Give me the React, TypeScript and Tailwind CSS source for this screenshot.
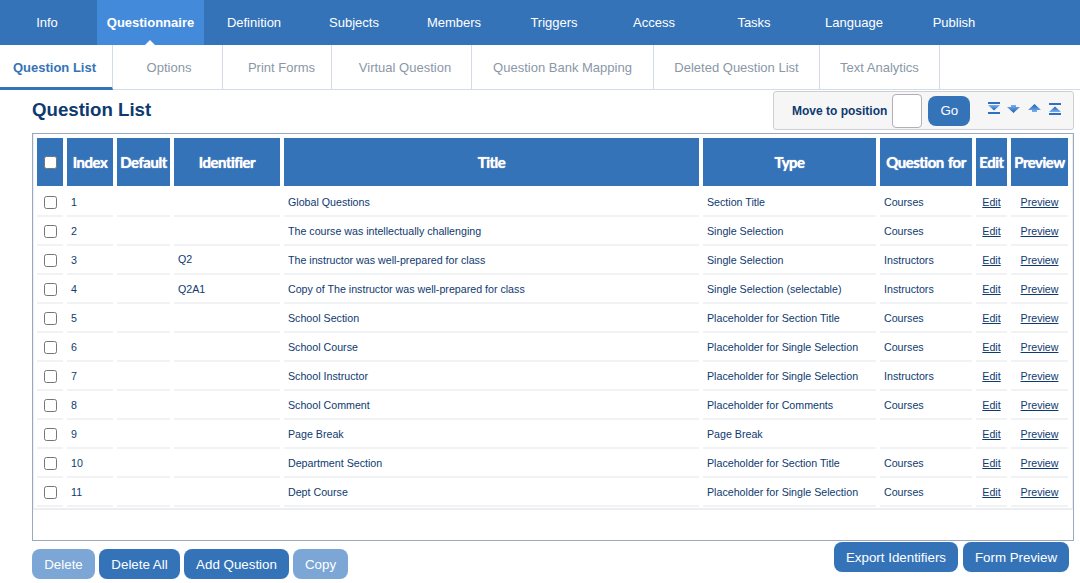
const navItems = ['Definition', 'Subjects', 'Members', 'Triggers', 'Access', 'Tasks', 'Language', 'Publish']

const subTabs = [
    { label: 'Options', className: 'w-[110px] pl-[3px]' },
    { label: 'Print Forms', className: 'w-[109px] pl-[9px]' },
    { label: 'Virtual Question', className: 'w-[140px] pl-[7px]' },
    { label: 'Question Bank Mapping', className: 'w-[182px]' },
    { label: 'Deleted Question List', className: 'w-[166px]' },
    { label: 'Text Analytics', className: 'w-[120px]' },
]

const rows = [
    ['1', '', 'Global Questions', 'Section Title', 'Courses'],
    ['2', '', 'The course was intellectually challenging', 'Single Selection', 'Courses'],
    ['3', 'Q2', 'The instructor was well-prepared for class', 'Single Selection', 'Instructors'],
    ['4', 'Q2A1', 'Copy of The instructor was well-prepared for class', 'Single Selection (selectable)', 'Instructors'],
    ['5', '', 'School Section', 'Placeholder for Section Title', 'Courses'],
    ['6', '', 'School Course', 'Placeholder for Single Selection', 'Courses'],
    ['7', '', 'School Instructor', 'Placeholder for Single Selection', 'Instructors'],
    ['8', '', 'School Comment', 'Placeholder for Comments', 'Courses'],
    ['9', '', 'Page Break', 'Page Break', ''],
    ['10', '', 'Department Section', 'Placeholder for Section Title', 'Courses'],
    ['11', '', 'Dept Course', 'Placeholder for Single Selection', 'Courses'],
]

const headers = [
    { label: 'Index', width: 'w-[46px]' },
    { label: 'Default', width: 'w-[53px]' },
    { label: 'Identifier', width: 'w-[106px]' },
    { label: 'Title', width: 'w-[415px]' },
    { label: 'Type', width: 'w-[173px]' },
    { label: 'Question for', width: 'w-[92px]' },
    { label: 'Edit', width: 'w-[31px]' },
    { label: 'Preview', width: 'w-[57px]' },
]

function Checkbox() {
    return <span className="block ml-[7px] w-[13px] h-[13px] rounded-[2.5px] border border-[#767676] bg-white" />
}

function ArrowIcon({ flip, bars, className }: { flip?: boolean; bars?: boolean; className?: string }) {
    return (
        <svg
            width={bars ? 12 : 13}
            height="13"
            viewBox={bars ? '0.5 0 12 13' : '0 0 13 13'}
            className={`${flip ? 'rotate-180' : ''} ${className ?? ''}`}
        >
            <defs>
                <linearGradient id="arrowBlue" x1="0" y1="0" x2="0" y2="1">
                    <stop offset="0" stopColor="#7ab0ee" />
                    <stop offset="1" stopColor="#1f5fb5" />
                </linearGradient>
            </defs>
            {bars ? (
                <>
                    <rect x="0.5" y="0" width="12" height="2" fill="#2f6fc4" />
                    <path d="M0.5 3 H12.5 L6.5 8.5 Z" fill="url(#arrowBlue)" />
                    <rect x="0.5" y="10" width="12" height="2" fill="#2f6fc4" />
                </>
            ) : (
                <path d="M4 3 H9 V5 H13 L6.5 11 L0 5 H4 Z" fill="url(#arrowBlue)" />
            )}
        </svg>
    )
}

function Button({ label, disabled, width }: { label: string; disabled?: boolean; width: string }) {
    return (
        <button className={`h-[30px] pt-px rounded-lg text-[13.33px] text-white ${width} ${disabled ? 'bg-[#7ba6d5]' : 'bg-[#3573b9]'}`}>
            {label}
        </button>
    )
}

export default function App() {
    return (
        <div className="w-[1080px] h-[583px] overflow-hidden bg-white font-['Liberation_Sans',Arial,sans-serif]">
            {/* Top nav */}
            <div className="flex h-[45px] bg-[#3573b9] text-[13px] text-white">
                <div className="w-[97px] pr-[3px] flex items-center justify-center">Info</div>
                <div className="relative w-[107px] flex items-center justify-center bg-[#448ada] font-bold">
                    Questionnaire
                    <span className="absolute bottom-0 left-[48px] w-0 h-0 border-x-[5px] border-x-transparent border-b-[5px] border-b-white" />
                </div>
                {navItems.map((item) => (
                    <div key={item} className="w-[100px] flex items-center justify-center">
                        {item}
                    </div>
                ))}
            </div>

            {/* Sub tabs */}
            <div className="flex h-[45px] border-b border-[#d3dce6] text-[13px] text-[#8a97a8]">
                <div className="w-[113px] -mb-px pr-[3px] pt-[4px] flex items-center justify-center border-b-[3px] border-[#3573b9] border-r border-r-[#d3dce6] font-bold text-[#3573b9]">
                    Question List
                </div>
                {subTabs.map((tab) => (
                    <div key={tab.label} className={`${tab.className} pt-[2px] flex items-center justify-center border-r border-[#d3dce6]`}>
                        {tab.label}
                    </div>
                ))}
            </div>

            {/* Title and move box */}
            <div className="flex justify-between items-start h-[43px] pl-[32px] pr-[6px] pt-[1px]">
                <h1 className="mt-[7px] text-[18.67px] leading-[24px] font-bold text-[#0e3a70]">Question List</h1>
                <div className="flex items-center w-[301px] h-[39px] pl-[18px] rounded-[3px] border border-[#ccd0d6] bg-[#f6f6f6]">
                    <span className="text-[12px] font-bold text-[#0e3a70] whitespace-nowrap">Move to position</span>
                    <span className="ml-[5px] w-[30px] h-[34px] rounded-[4px] border border-[#b5aeb8] bg-white" />
                    <button className="ml-[6px] w-[42px] h-[30px] rounded-lg bg-[#3573b9] text-[13.33px] text-white">Go</button>
                    <div className="ml-[18px] flex gap-[8px] mb-[4px]">
                        <ArrowIcon bars />
                        <ArrowIcon className="-ml-px" />
                        <ArrowIcon flip />
                        <ArrowIcon bars flip />
                    </div>
                </div>
            </div>

            {/* Table box */}
            <div className="mx-[32px] w-[1042px] h-[408px] border border-[#9aa9bf]">
                <div className="h-[376px] border-x border-b-2 border-[#eceef1] pt-[4px]">
                    <table className="-ml-px table-fixed border-separate border-spacing-x-1 border-spacing-y-0 w-[1039px] text-[10.67px] text-[#0e3a70]">
                        <thead>
                            <tr>
                                <th className="w-[26px] h-[50px] border-b-2 border-white bg-[#3573b9]">
                                    <Checkbox />
                                </th>
                                {headers.map((h) => (
                                    <th
                                        key={h.label}
                                        className={`${h.width} border-b-2 border-white bg-[#3573b9] font-['Lato',sans-serif] text-[15px] font-bold tracking-[-0.5px] [word-spacing:1px] [text-shadow:0_0_1px_#fff] whitespace-nowrap text-white`}
                                    >
                                        {h.label}
                                    </th>
                                ))}
                            </tr>
                        </thead>
                        <tbody>
                            {rows.map((row) => (
                                <tr key={row[0]} className="h-[29px]">
                                    <td className="border-b-2 border-[#f1f2f4] pt-[2px]">
                                        <Checkbox />
                                    </td>
                                    <td className="border-b-2 border-[#f1f2f4] pl-1">{row[0]}</td>
                                    <td className="border-b-2 border-[#f1f2f4]"></td>
                                    <td className={`border-b-2 border-[#f1f2f4] pl-1 ${row[1] === 'Q2' ? 'pb-[2px]' : ''}`}>{row[1]}</td>
                                    <td className="border-b-2 border-[#f1f2f4] pl-1 whitespace-nowrap">{row[2]}</td>
                                    <td className="border-b-2 border-[#f1f2f4] pl-1 whitespace-nowrap">{row[3]}</td>
                                    <td className="border-b-2 border-[#f1f2f4] pl-1">{row[4]}</td>
                                    <td className="border-b-2 border-[#f1f2f4] text-center underline">Edit</td>
                                    <td className="border-b-2 border-[#f1f2f4] text-center underline">Preview</td>
                                </tr>
                            ))}
                        </tbody>
                    </table>
                </div>
            </div>

            {/* Bottom buttons */}
            <div className="flex justify-between pl-[32px] pr-[11px]">
                <div className="flex gap-1 mt-[8px]">
                    <Button label="Delete" disabled width="w-[63px]" />
                    <Button label="Delete All" width="w-[81px]" />
                    <Button label="Add Question" width="w-[105px]" />
                    <Button label="Copy" disabled width="w-[55px]" />
                </div>
                <div className="flex gap-[5px] mt-[1px]">
                    <Button label="Export Identifiers" width="w-[124px]" />
                    <Button label="Form Preview" width="w-[106px]" />
                </div>
            </div>
        </div>
    )
}
